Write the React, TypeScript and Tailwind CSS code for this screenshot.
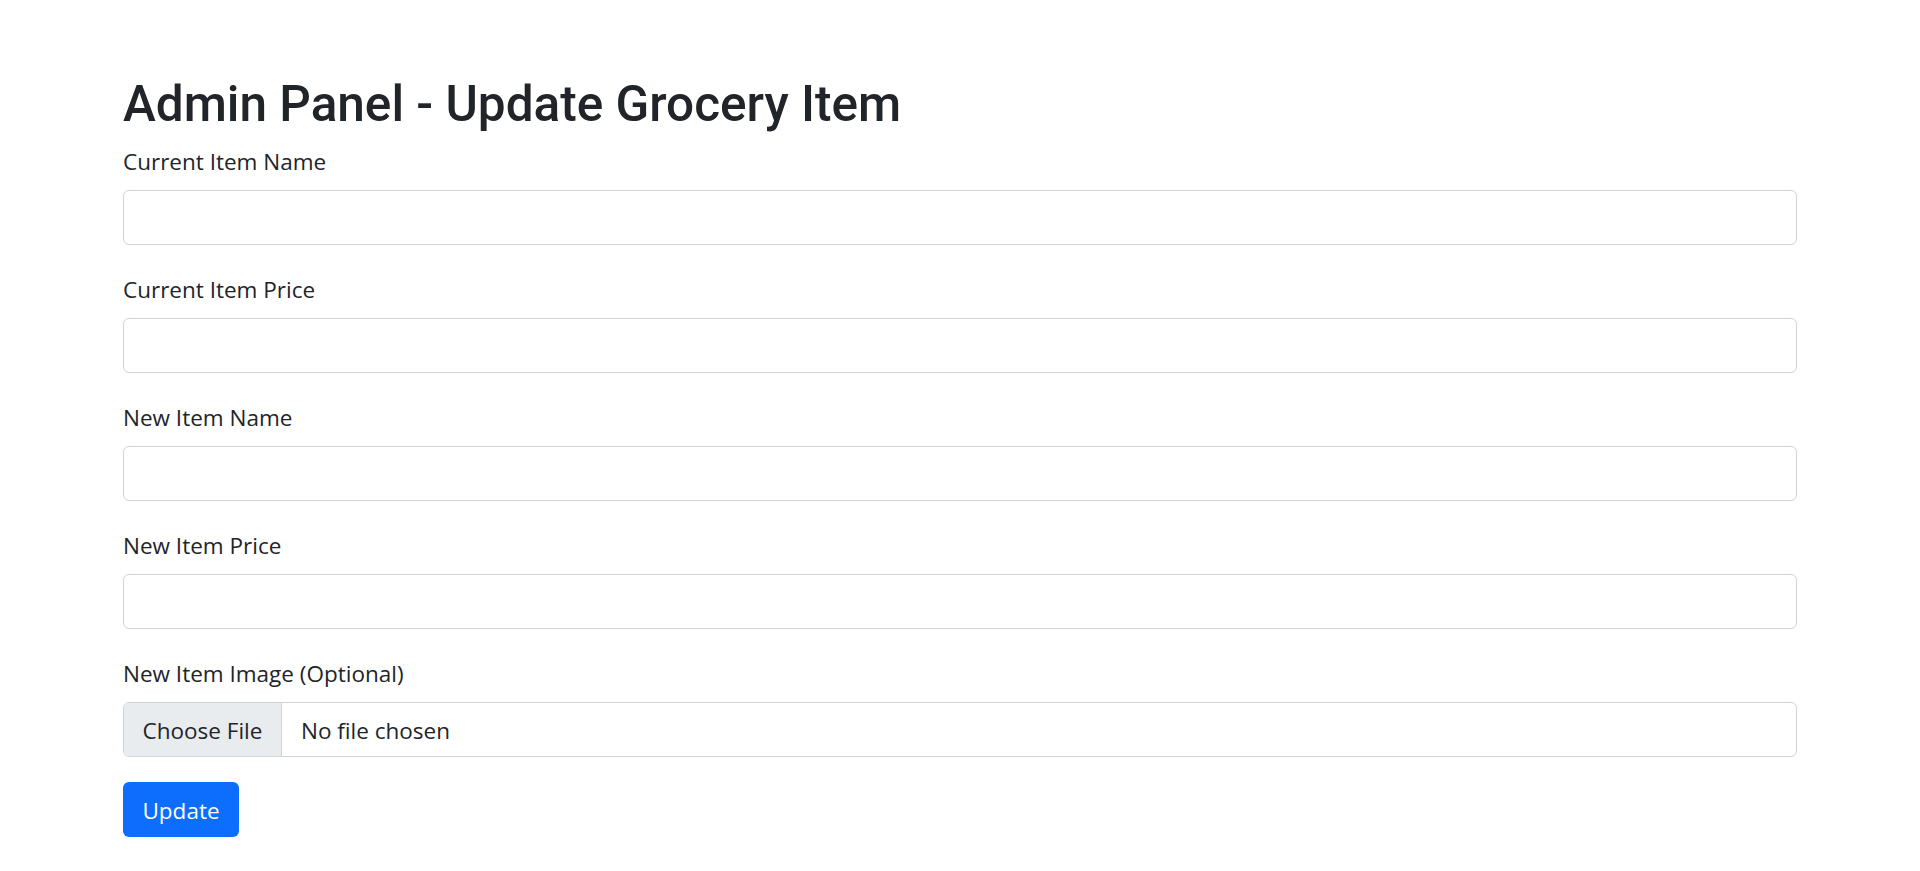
import React from 'react';

const fields = [
  { id: 'currentName', label: 'Current Item Name' },
  { id: 'currentPrice', label: 'Current Item Price' },
  { id: 'newName', label: 'New Item Name' },
  { id: 'newPrice', label: 'New Item Price' },
];

export default function App() {
  return (
    <div
      className="min-h-screen bg-white text-[#212529]"
      style={{ fontFamily: '"Open Sans", "Noto Sans", sans-serif' }}
    >
      <div className="mx-auto w-[1674px] pt-[68px]">
        <h1
          className="text-[49.5px] font-medium leading-[72px] mb-[4px]"
          style={{ fontFamily: 'Roboto, "Open Sans", sans-serif' }}
        >
          Admin Panel - Update Grocery Item
        </h1>

        <form onSubmit={(e) => e.preventDefault()}>
          {fields.map(({ id, label }) => (
            <div key={id} className="mb-[27px]">
              <label htmlFor={id} className="block text-[22.5px] leading-[36px] mb-[10px]">
                {label}
              </label>
              <input
                id={id}
                type="text"
                className="block w-full h-[55px] rounded-[6px] border border-[#ced4da] bg-white px-[18px] text-[22.5px] outline-none"
              />
            </div>
          ))}

          {/* File input */}
          <div className="mb-[25px]">
            <label className="block text-[22.5px] leading-[36px] mb-[10px]">
              New Item Image (Optional)
            </label>
            <div className="flex h-[55px] w-full overflow-hidden rounded-[6px] border border-[#ced4da] bg-white text-[22.5px]">
              <span className="flex w-[158px] shrink-0 items-center justify-center border-r border-[#ced4da] bg-[#e9ecef] pt-[3px]">
                Choose File
              </span>
              <span className="flex items-center pl-[19px] pt-[3px]">No file chosen</span>
            </div>
          </div>

          <button
            type="submit"
            className="flex h-[55px] w-[116px] items-center justify-center rounded-[6px] bg-[#0d6efd] pt-[3px] text-[22.5px] text-white"
          >
            Update
          </button>
        </form>
      </div>
    </div>
  );
}
